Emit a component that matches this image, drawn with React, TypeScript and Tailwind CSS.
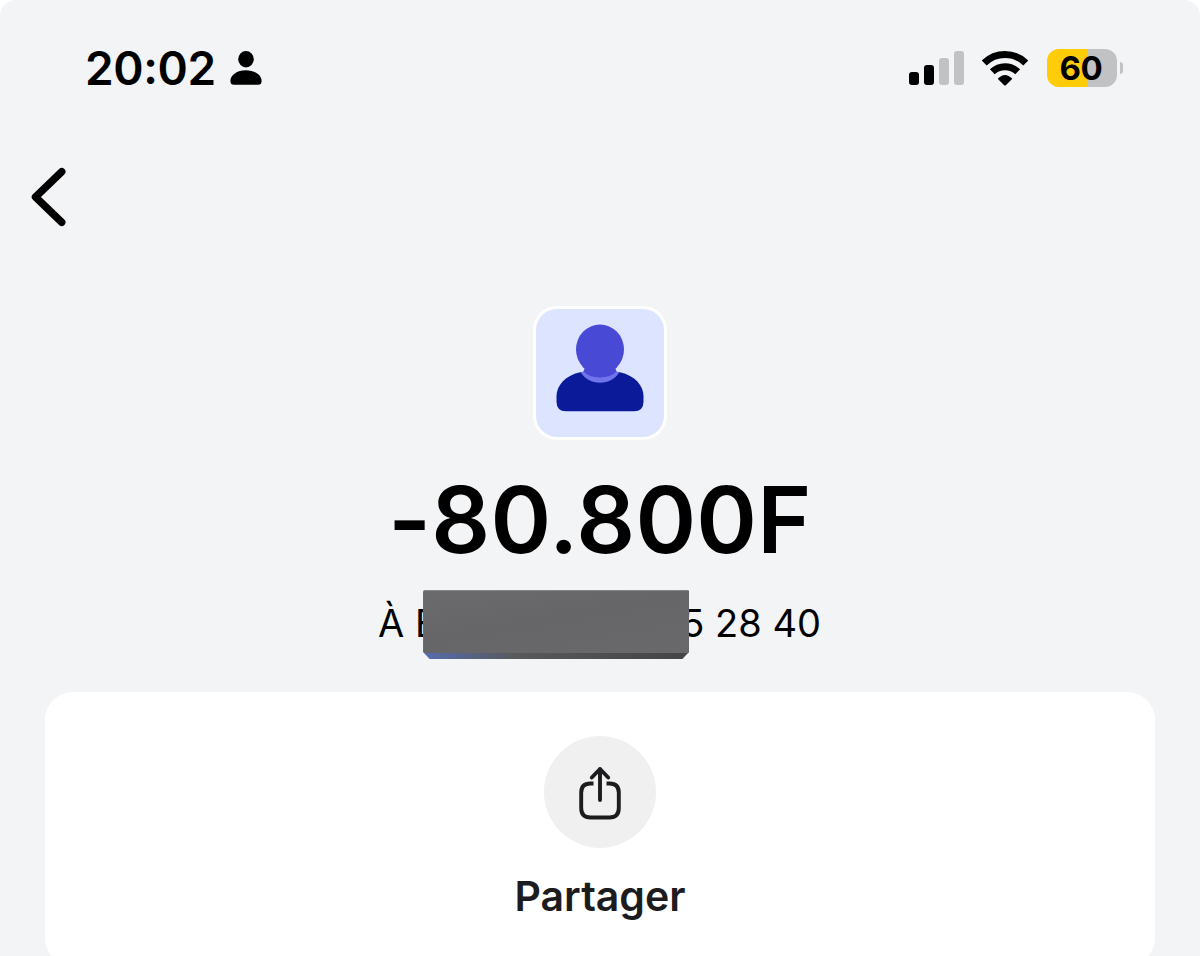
import * as React from 'react';

const StatusBar: React.FC = () => (
  <header className="flex h-[136px] items-center justify-between pl-[85px] pr-[77px]">
    <div className="flex items-center gap-[14px]">
      <span className="text-[46px] leading-none font-semibold tracking-[-0.4px]">
        20<span className="relative top-[-1px]">:</span>02
      </span>
      <svg className="h-[34px] w-8" viewBox="0 0 32 34" fill="currentColor" aria-hidden="true">
        <ellipse cx="16" cy="8.3" rx="7.8" ry="8.2" />
        <path d="M0.4 30C0.4 24 7 19.2 16 19.2S31.6 24 31.6 30c0 2.7-1.2 3.8-3.6 3.8H4C1.6 33.8.4 32.7.4 30Z" />
      </svg>
    </div>
    <div className="flex items-center">
      <div className="flex h-[34px] items-end gap-[5px]">
        <span className="h-[13px] w-[10px] rounded-[3px] bg-black" />
        <span className="h-[20px] w-[10px] rounded-[3px] bg-black" />
        <span className="h-[27px] w-[10px] rounded-[3px] bg-[#c1c2c4]" />
        <span className="h-[34px] w-[10px] rounded-[3px] bg-[#c1c2c4]" />
      </div>
      <svg className="ml-[18px] h-[35px] w-[46px]" viewBox="0 0 46 35" fill="none" stroke="currentColor" aria-hidden="true">
        <path d="M2.200 12A29.700 29.700 0 0 1 43.800 12" strokeWidth="7" />
        <path d="M10.300 20.800A18.500 18.500 0 0 1 35.700 20.800" strokeWidth="7" />
        <path d="M15.700 27.800Q23 20.200 30.300 27.800L23.800 34.200Q23 34.900 22.200 34.200Z" fill="currentColor" stroke="none" />
      </svg>
      <div className="ml-[19px] flex items-center">
        <div className="flex h-[38px] w-[70px] items-center justify-center rounded-[12px] bg-[linear-gradient(to_right,#ffcc0a_59%,#c1c2c4_59%)]">
          <span className="relative left-[-1px] text-[33px] leading-none font-bold tracking-[-0.3px]">60</span>
        </div>
        <span className="ml-[3px] h-[12px] w-[3px] rounded-r-full bg-[#c1c2c4]" />
      </div>
    </div>
  </header>
);

const Avatar: React.FC = () => (
  <div className="size-[134px] rounded-[24px] border-[3.5px] border-white bg-[#dce4ff]">
    <svg viewBox="0 0 128 128" className="size-full" aria-hidden="true">
      <path
        d="M44 63.300H84C99 66.500 107.500 77 107.500 87V92.500Q107.500 102.300 98 102.300H30Q20.500 102.300 20.500 92.500V87C20.500 77 29 66.500 44 63.300Z"
        fill="#0b1a99"
      />
      <path d="M44.700 63.300L50 61.500H78L83.300 63.300C79.500 70 72 73.700 64 73.700S48.500 70 44.700 63.300Z" fill="#7173ea" />
      <path d="M49 58.500H79L80.500 62.300C77 66.500 71 68.400 64 68.400S51 66.500 47.500 62.300Z" fill="#4849d4" />
      <ellipse cx="64" cy="40.500" rx="24" ry="25" fill="#4849d4" />
    </svg>
  </div>
);

const ShareIcon: React.FC = () => (
  <svg
    className="relative top-px h-[54px] w-[44px]"
    viewBox="0 0 44 54"
    fill="none"
    stroke="currentColor"
    strokeWidth="3.9"
    strokeLinejoin="round"
    aria-hidden="true"
  >
    <path d="M15.500 17.500H12.500Q3.200 17.500 3.200 26.500V42Q3.200 51.500 12.500 51.500H31.500Q40.800 51.500 40.800 42V26.500Q40.800 17.500 31.500 17.500H28.500" />
    <path d="M22 34V3M13.800 11.500L22 3L30.200 11.500" strokeLinecap="round" />
  </svg>
);

const Recipient: React.FC = () => (
  <div className="relative mt-[19px] flex h-[72px] w-[444px] items-center justify-between text-[38px] leading-none whitespace-nowrap">
    <span>À E</span>
    <span className="pr-px">5 28 40</span>
    <div className="absolute top-[3px] left-[45px] h-[69px] w-[266px] overflow-hidden rounded-t-[2px] bg-[linear-gradient(to_right,#566cae,#59595b_35%,#444345)] [clip-path:polygon(0_0,100%_0,100%_90%,97.500%_100%,2.500%_100%,0_90%)]">
      <div className="ml-[1px] h-[63px] border-t border-[#85858a] bg-[linear-gradient(170deg,#6b6b6d,#666668_45%,#69696b)]" />
    </div>
  </div>
);

const App: React.FC = () => {
  return (
    <div className="h-[956px] overflow-hidden bg-white font-['Inter',sans-serif] text-black">
      <main className="h-full rounded-t-[16px] bg-[#f2f4f6]">
        <StatusBar />
        <nav className="flex h-[122px] items-center pl-[30px]">
          <button type="button" aria-label="Retour">
            <svg className="h-[60px] w-[37px]" viewBox="0 0 37 60" fill="none" stroke="currentColor" strokeWidth="7.500" strokeLinecap="round" strokeLinejoin="round">
              <path d="M31.700 4.700L5.500 30L31.700 55.300" />
            </svg>
          </button>
        </nav>
        <section className="flex flex-col items-center pt-[48px]">
          <Avatar />
          <h1 className="mt-[32px] h-[96px] text-[92px] leading-[96px] font-semibold tracking-[0.3px] whitespace-nowrap">
            -80.800F
          </h1>
          <Recipient />
        </section>
        <section className="mx-[45px] mt-[33px] flex h-[274px] flex-col items-center rounded-[28px] bg-white pt-[44px] text-[#1c1c1e]">
          <button type="button" className="flex flex-col items-center">
            <span className="flex size-[112px] items-center justify-center rounded-full bg-[#f0f0f0]">
              <ShareIcon />
            </span>
            <span className="mt-[24px] text-[41px] leading-[48px] font-semibold">Partager</span>
          </button>
        </section>
      </main>
    </div>
  );
};

export default App;
